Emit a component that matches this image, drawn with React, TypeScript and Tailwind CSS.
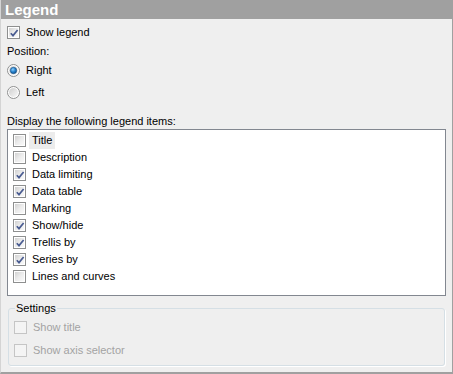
import type { ReactNode } from 'react';

const font = { fontFamily: '"Liberation Sans", Arial, sans-serif' };

function CheckBox({ checked, disabled }: { checked?: boolean; disabled?: boolean }): ReactNode {
  if (disabled) {
    return (
      <span className="flex h-[13px] w-[13px] shrink-0 border border-[#c5c5c5] bg-[#f4f4f4]" />
    );
  }
  return (
    <span className="flex h-[13px] w-[13px] shrink-0 items-center justify-center border border-[#8e8f8f] bg-white p-[1px]">
      <span className="relative h-full w-full bg-linear-to-br from-[#d2d2d2] via-[#ececec] to-[#f9f9f9]">
        {checked && (
          <svg width="11" height="11" viewBox="0 0 11 11" className="absolute left-0 top-0">
            <path d="M1.8 5.2 L4 7.6 L8.6 2" fill="none" stroke="#4a5c91" strokeWidth="1.7" />
          </svg>
        )}
      </span>
    </span>
  );
}

function Radio({ checked }: { checked?: boolean }): ReactNode {
  return (
    <svg width="13" height="13" viewBox="0 0 13 13" className="shrink-0">
      <defs>
        <linearGradient id="rbg" x1="0" y1="0" x2="1" y2="1">
          <stop offset="0" stopColor="#cfcfcf" />
          <stop offset="1" stopColor="#f8f8f8" />
        </linearGradient>
        <radialGradient id="rdot" cx="0.4" cy="0.35" r="0.7">
          <stop offset="0" stopColor="#8fd0ff" />
          <stop offset="0.5" stopColor="#2a86d0" />
          <stop offset="1" stopColor="#0b4f8e" />
        </radialGradient>
      </defs>
      <circle cx="6.5" cy="6.5" r="6" fill="#fff" stroke="#8e8f8f" strokeWidth="1" />
      <circle cx="6.5" cy="6.5" r="4.5" fill="url(#rbg)" />
      {checked && <circle cx="6.5" cy="6.5" r="3.2" fill="url(#rdot)" stroke="#1b4f82" strokeWidth="0.6" />}
    </svg>
  );
}

const items: { label: string; checked: boolean }[] = [
  { label: 'Title', checked: false },
  { label: 'Description', checked: false },
  { label: 'Data limiting', checked: true },
  { label: 'Data table', checked: true },
  { label: 'Marking', checked: false },
  { label: 'Show/hide', checked: true },
  { label: 'Trellis by', checked: true },
  { label: 'Series by', checked: true },
  { label: 'Lines and curves', checked: false },
];

export default function App(): ReactNode {
  return (
    <div
      style={font}
      className="flex h-[374px] w-[453px] flex-col border-b-2 border-l border-r border-b-[#a0a0a0] border-l-[#d4d4d4] border-r-[#a0a0a0] bg-[#efefef] text-[11px] leading-[13px] text-black"
    >
      <div className="flex h-[19px] shrink-0 items-center bg-[#a0a0a0] pl-[4px] text-[15px] font-bold text-white">
        Legend
      </div>
      <div className="flex flex-col px-[6px]">
        <div className="mt-[7px] flex h-[13px] items-center gap-[6px]">
          <CheckBox checked />
          <span>Show legend</span>
        </div>
        <div className="mt-[6px] flex h-[13px] items-center">Position:</div>
        <div className="mt-[6px] flex h-[13px] items-center gap-[6px]">
          <Radio checked />
          <span>Right</span>
        </div>
        <div className="mt-[9px] flex h-[13px] items-center gap-[6px]">
          <Radio />
          <span>Left</span>
        </div>
        <div className="mt-[16px] flex h-[13px] items-center">Display the following legend items:</div>
        <div className="mt-[1px] flex h-[167px] flex-col border border-[#828790] bg-white px-[5px] pt-[2px]">
          {items.map((it, i) => (
            <div key={it.label} className="flex h-[17px] items-center gap-[3px]">
              <CheckBox checked={it.checked} />
              <span className={i === 0 ? 'flex h-[17px] items-center bg-[#ececec] px-[3px]' : 'px-[3px]'}>
                {it.label}
              </span>
            </div>
          ))}
        </div>
        <div className="relative mx-[1px] mt-[12px] flex h-[58px] flex-col rounded-[3px] border border-[#d5dfe5] px-[5px] shadow-[1px_1px_0_#fff]">
          <span className="absolute -top-[7px] left-[6px] bg-[#efefef] px-[1px] text-black">Settings</span>
          <div className="mt-[12px] flex h-[13px] items-center gap-[6px] text-[#a3a3a3]">
            <CheckBox disabled />
            <span>Show title</span>
          </div>
          <div className="mt-[10px] flex h-[13px] items-center gap-[6px] text-[#a3a3a3]">
            <CheckBox disabled />
            <span>Show axis selector</span>
          </div>
        </div>
      </div>
    </div>
  );
}
